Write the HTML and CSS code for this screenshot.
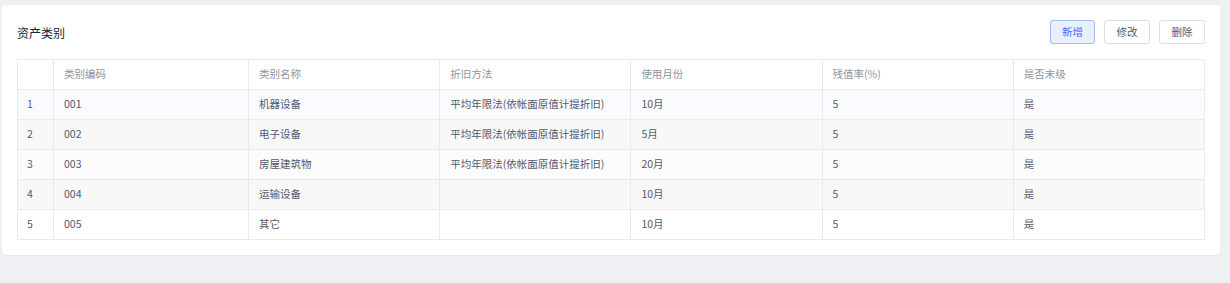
FILE: index.html
```html
<!DOCTYPE html>
<html lang="zh-CN">
<head>
<meta charset="utf-8">
<title>资产类别</title>
<link rel="stylesheet" href="styles.css">
</head>
<body>
<div class="page">
  <div class="card">
    <div class="toolbar">
      <div class="title">资产类别</div>
      <div class="actions">
        <button class="btn btn-primary">新增</button>
        <button class="btn">修改</button>
        <button class="btn">删除</button>
      </div>
    </div>
    <table class="grid">
      <colgroup>
        <col class="c-idx"><col class="c-code"><col><col><col><col><col>
      </colgroup>
      <thead>
        <tr><th></th><th>类别编码</th><th>类别名称</th><th>折旧方法</th><th>使用月份</th><th>残值率(%)</th><th>是否末级</th></tr>
      </thead>
      <tbody>
        <tr class="r1"><td>1</td><td>001</td><td>机器设备</td><td>平均年限法(依帐面原值计提折旧)</td><td>10月</td><td>5</td><td>是</td></tr>
        <tr class="r2"><td>2</td><td>002</td><td>电子设备</td><td>平均年限法(依帐面原值计提折旧)</td><td>5月</td><td>5</td><td>是</td></tr>
        <tr class="r3"><td>3</td><td>003</td><td>房屋建筑物</td><td>平均年限法(依帐面原值计提折旧)</td><td>20月</td><td>5</td><td>是</td></tr>
        <tr class="r4"><td>4</td><td>004</td><td>运输设备</td><td></td><td>10月</td><td>5</td><td>是</td></tr>
        <tr class="r5"><td>5</td><td>005</td><td>其它</td><td></td><td>10月</td><td>5</td><td>是</td></tr>
      </tbody>
    </table>
  </div>
</div>
</body>
</html>
```

FILE: styles.css
```css
html, body {
  margin: 0;
  padding: 0;
  background: #eff0f4;
  font-family: "Noto Sans CJK SC", "Liberation Sans", sans-serif;
  font-size: 10.5px;
  color: #515a6e;
}
.page {
  padding: 5px 10px 0 2px;
  height: 278px;
}
.card {
  background: #fff;
  border-radius: 4px;
  box-shadow: 0 1px 2px rgba(0,0,0,0.04);
  padding: 15px;
}
.toolbar {
  display: flex;
  align-items: center;
  justify-content: space-between;
  height: 24px;
  margin-bottom: 15px;
}
.title {
  font-size: 12px;
  color: #17233d;
}
.actions {
  display: flex;
  gap: 9px;
}
.btn {
  height: 24px;
  width: 46px;
  padding: 0;
  border: 1px solid #dcdee2;
  border-radius: 3px;
  background: #fff;
  color: #515a6e;
  font-family: inherit;
  font-size: 10.5px;
  line-height: 22px;
}
.btn-primary {
  width: 45px;
  background: #e8effe;
  border-color: #a3b9f6;
  color: #4a6ff2;
}
.grid {
  width: 100%;
  border-collapse: collapse;
  table-layout: fixed;
  border: 1px solid #e8eaec;
}
.c-idx { width: 36px; }
.c-code { width: 195px; }
.grid th, .grid td {
  border: 1px solid #e8eaec;
  height: 27px;
  padding: 0 9px 2px;
  text-align: left;
  font-weight: normal;
  white-space: nowrap;
}
.grid th {
  color: #8f949c;
  background: #fff;
}
.grid th:not(:first-child), .grid td:not(:first-child) {
  padding-left: 10px;
}
.r1 { background: #f9fbfe; }
.r2 { background: #f8f8f9; }
.r3 { background: #fcfcfd; }
.r4 { background: #f8f8f9; }
.r5 { background: #fff; }
```
